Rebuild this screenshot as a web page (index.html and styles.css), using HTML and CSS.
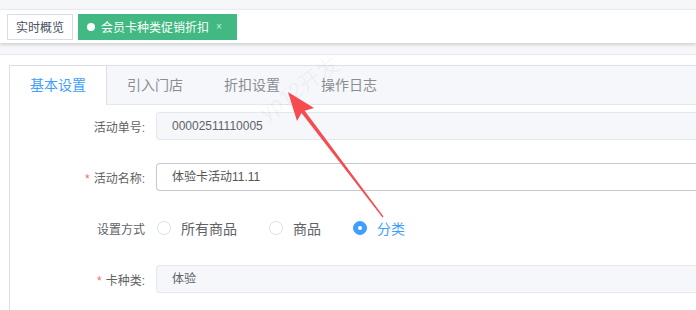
FILE: index.html
```html
<!DOCTYPE html>
<html lang="zh">
<head>
<meta charset="utf-8">
<link rel="stylesheet" href="styles.css">
</head>
<body>
<div class="top">
  <div class="tagsbar">
    <span class="tag">实时概览</span>
    <span class="tag tag-active"><i class="dot"></i>会员卡种类促销折扣<span class="close">×</span></span>
  </div>
</div>
<div class="strip"></div>
<div class="main">
  <div class="card">
    <div class="tabs">
      <div class="tab active">基本设置</div>
      <div class="tab">引入门店</div>
      <div class="tab">折扣设置</div>
      <div class="tab">操作日志</div>
    </div>
    <div class="form">
      <div class="row">
        <label class="label">活动单号:</label>
        <div class="input disabled">00002511110005</div>
      </div>
      <div class="row">
        <label class="label"><span class="req">*</span>活动名称:</label>
        <div class="input">体验卡活动11.11</div>
      </div>
      <div class="row">
        <label class="label">设置方式</label>
        <div class="radios">
          <span class="radio"><i class="circle"></i>所有商品</span>
          <span class="radio"><i class="circle"></i>商品</span>
          <span class="radio checked"><i class="circle"></i>分类</span>
        </div>
      </div>
      <div class="row">
        <label class="label"><span class="req">*</span>卡种类:</label>
        <div class="input disabled">体验</div>
      </div>
    </div>
  </div>
</div>
<span class="watermark">yp12开发</span>
<svg class="arrow" width="696" height="310" viewBox="0 0 696 310">
  <polygon points="288,92 314,108 304.7,110.7 383.5,216.6 382.5,217.4 301.5,113.1 297,121" fill="#f64c4f"/>
</svg>
</body>
</html>
```

FILE: styles.css
```css
html, body {
  margin: 0;
  padding: 0;
  width: 696px;
  height: 310px;
  overflow: hidden;
  background: #fff;
  font-family: "Liberation Sans", "Noto Sans CJK SC", sans-serif;
  position: relative;
}

.top {
  padding-top: 9px;
  background: #f6f7f9;
}

.tagsbar {
  height: 33px;
  background: #fff;
  border-top: 1px solid #e9ebef;
  box-shadow: 0 2px 3px rgba(0, 0, 0, 0.15);
  display: flex;
  align-items: center;
  padding-left: 7px;
  gap: 5px;
  position: relative;
  z-index: 1;
}

.tag {
  height: 26px;
  box-sizing: border-box;
  border: 1px solid #d8dce5;
  padding: 0 8px;
  font-size: 12px;
  color: #495060;
  display: inline-flex;
  align-items: center;
}

.tag-active {
  background: #42b983;
  border-color: #42b983;
  color: #fff;
  padding: 0 11px 0 8px;
}

.dot {
  width: 8px;
  height: 8px;
  border-radius: 50%;
  background: #fff;
  margin-right: 6px;
}

.close {
  font-size: 10px;
  width: 12px;
  text-align: center;
  margin-left: 4px;
  color: rgba(255, 255, 255, 0.75);
}

.strip {
  height: 11px;
  background: #f6f7f9;
  border-bottom: 1px solid #e6e9ef;
}

.main {
  padding: 10px 0 0 9px;
}

.card {
  height: 244px;
  border: 1px solid #dcdfe6;
  border-right: none;
  border-bottom: none;
  background: #fff;
}

.tabs {
  display: flex;
  height: 38px;
  background: #f5f7fa;
  border-bottom: 1px solid #e4e7ed;
}

.tab {
  box-sizing: border-box;
  text-align: center;
  line-height: 38px;
  font-size: 14px;
  color: #8a8d93;
  border-right: 1px solid transparent;
  width: 97px;
}

.tab.active {
  background: #fff;
  color: #409eff;
  border-right-color: #dcdfe6;
  height: 39px;
}

.form {
  padding-top: 7px;
  display: flex;
  flex-direction: column;
  gap: 23px;
}

.row {
  display: flex;
  align-items: center;
  height: 28px;
}

.label {
  width: 146px;
  box-sizing: border-box;
  padding-right: 11px;
  text-align: right;
  font-size: 12px;
  color: #606266;
}

.req {
  color: #f56c6c;
  margin-right: 4px;
}

.input {
  flex: 1;
  height: 28px;
  box-sizing: border-box;
  border: 1px solid #c6c8d0;
  border-right: none;
  border-radius: 4px 0 0 4px;
  padding-left: 15px;
  font-size: 12px;
  line-height: 26px;
  color: #555;
}

.input.disabled {
  background: #f5f7fa;
  border-color: #e4e7ed;
  color: #606266;
}

.radios {
  display: flex;
  align-items: center;
  padding-left: 1px;
}

.radio {
  display: inline-flex;
  align-items: center;
  font-size: 14px;
  color: #606266;
  margin-right: 32px;
}

.circle {
  width: 12px;
  height: 12px;
  border: 1px solid #dcdfe6;
  border-radius: 50%;
  background: #fff;
  margin-right: 10px;
  position: relative;
}

.radio.checked {
  color: #409eff;
}

.radio.checked .circle {
  background: #409eff;
  border-color: #409eff;
}

.radio.checked .circle::after {
  content: "";
  position: absolute;
  left: 4px;
  top: 4px;
  width: 4px;
  height: 4px;
  border-radius: 50%;
  background: #fff;
}

.watermark {
  position: absolute;
  left: 252px;
  top: 70px;
  font-size: 22px;
  color: rgba(0, 0, 0, 0.05);
  transform: rotate(-35deg);
  pointer-events: none;
}

.arrow {
  position: absolute;
  left: 0;
  top: 0;
  pointer-events: none;
}
```
